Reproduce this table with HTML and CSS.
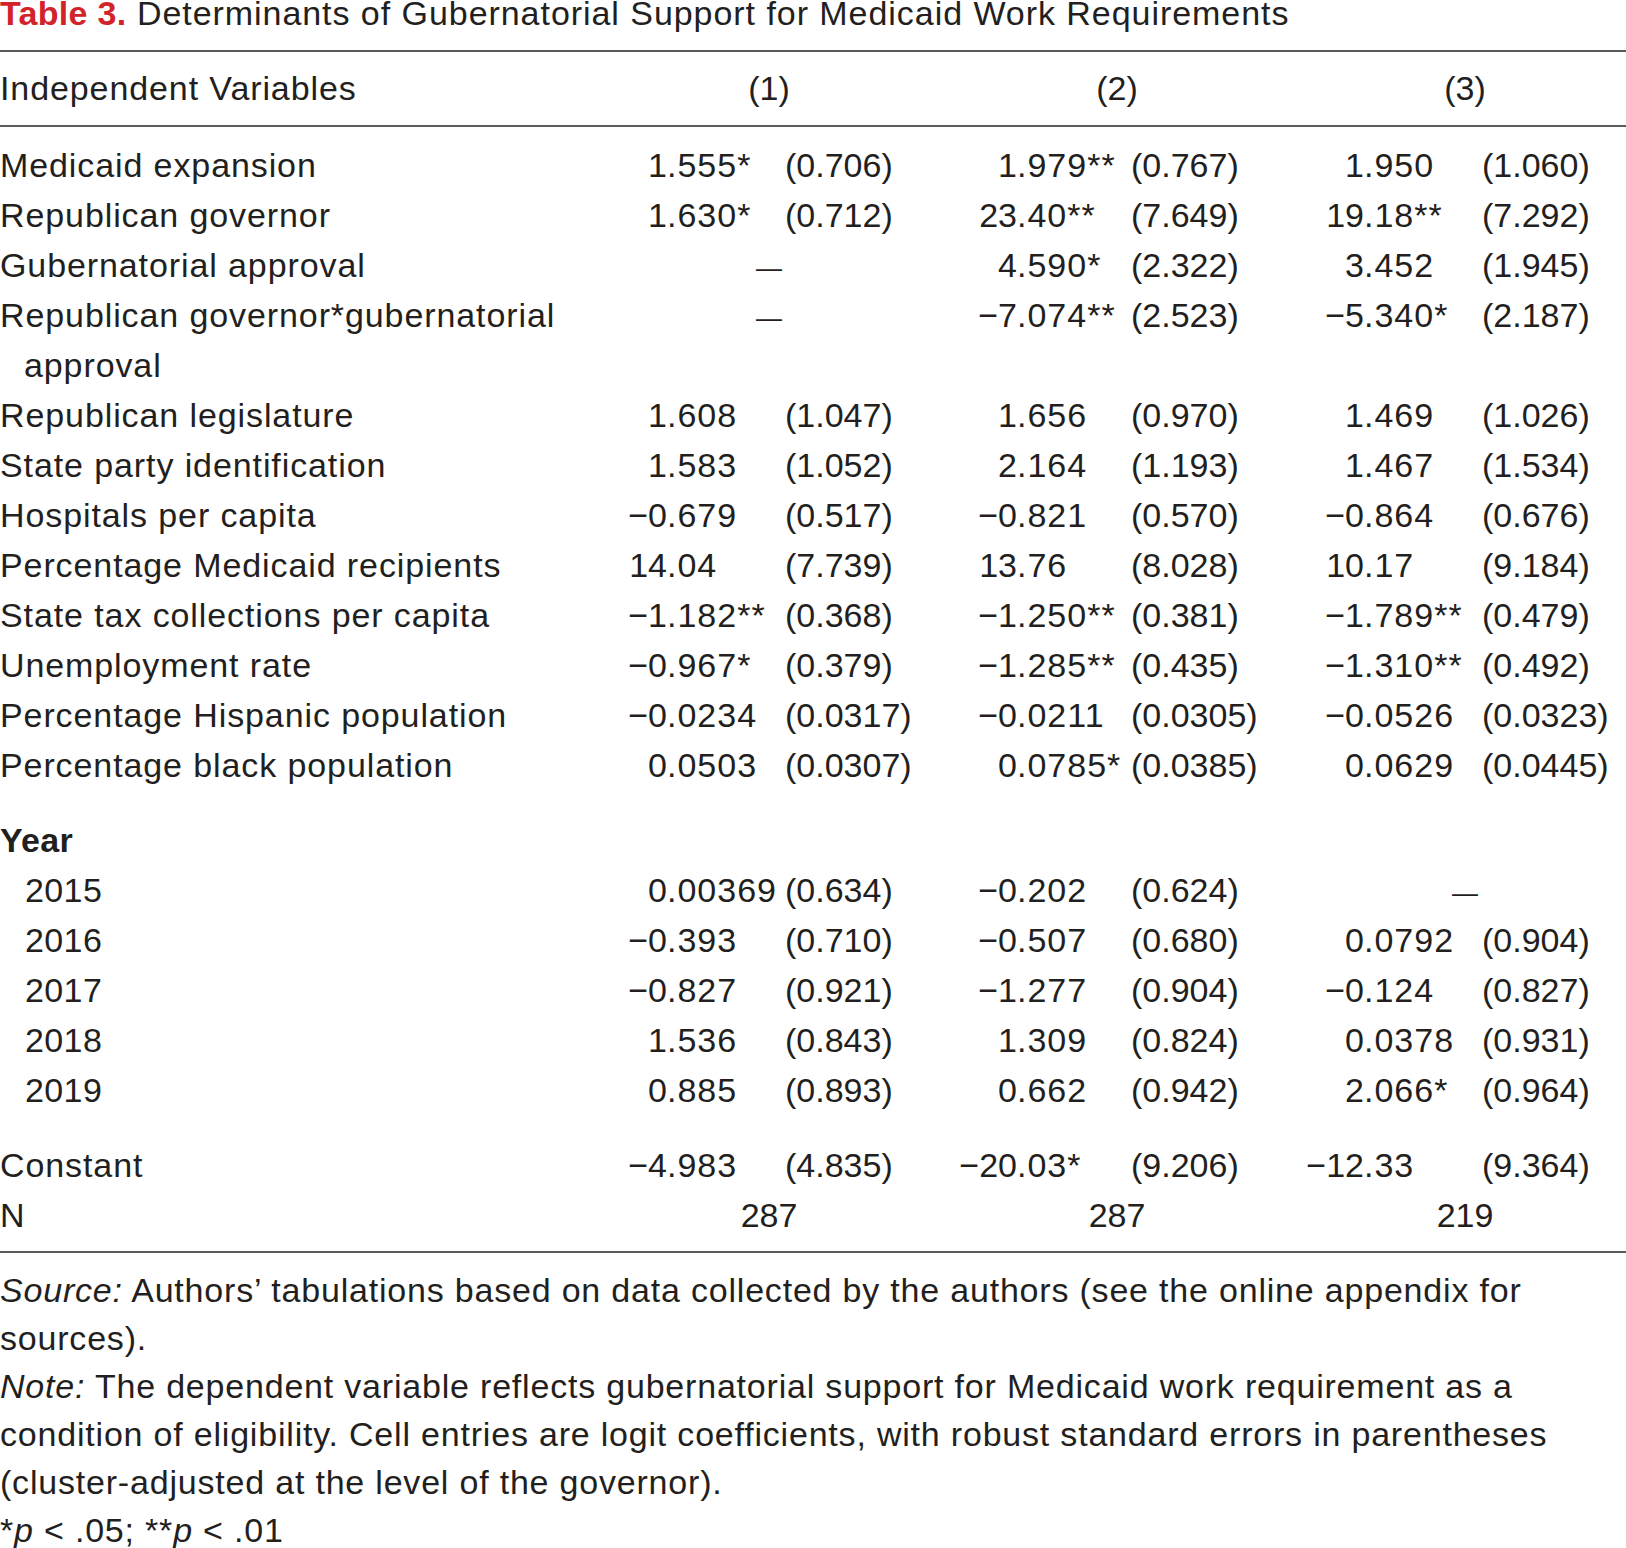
FILE: index.html
```html
<!DOCTYPE html>
<html lang="en">
<head>
<meta charset="utf-8">
<title>Table 3</title>
<link rel="stylesheet" href="styles.css">
</head>
<body>
<div class="title"><span class="title-num">Table 3.</span> Determinants of Gubernatorial Support for Medicaid Work Requirements</div>

<div class="thead">
  <div class="row">
    <div class="lbl">Independent Variables</div>
    <div class="c1">(1)</div>
    <div class="c2">(2)</div>
    <div class="c3">(3)</div>
  </div>
</div>

<div class="tbody">
  <div class="row">
    <div class="lbl">Medicaid expansion</div>
    <span class="i">1</span><span class="f">.555*</span><span class="s">(0.706)</span>
    <span class="i">1</span><span class="f">.979**</span><span class="s">(0.767)</span>
    <span class="i">1</span><span class="f">.950</span><span class="s">(1.060)</span>
  </div>
  <div class="row">
    <div class="lbl">Republican governor</div>
    <span class="i">1</span><span class="f">.630*</span><span class="s">(0.712)</span>
    <span class="i">23</span><span class="f">.40**</span><span class="s">(7.649)</span>
    <span class="i">19</span><span class="f">.18**</span><span class="s">(7.292)</span>
  </div>
  <div class="row">
    <div class="lbl">Gubernatorial approval</div>
    <div class="c1"><span class="dash">—</span></div>
    <span class="i">4</span><span class="f">.590*</span><span class="s">(2.322)</span>
    <span class="i">3</span><span class="f">.452</span><span class="s">(1.945)</span>
  </div>
  <div class="row">
    <div class="lbl">Republican governor*gubernatorial<br><span class="cont">approval</span></div>
    <div class="c1"><span class="dash">—</span></div>
    <span class="i">−7</span><span class="f">.074**</span><span class="s">(2.523)</span>
    <span class="i">−5</span><span class="f">.340*</span><span class="s">(2.187)</span>
  </div>
  <div class="row">
    <div class="lbl">Republican legislature</div>
    <span class="i">1</span><span class="f">.608</span><span class="s">(1.047)</span>
    <span class="i">1</span><span class="f">.656</span><span class="s">(0.970)</span>
    <span class="i">1</span><span class="f">.469</span><span class="s">(1.026)</span>
  </div>
  <div class="row">
    <div class="lbl">State party identification</div>
    <span class="i">1</span><span class="f">.583</span><span class="s">(1.052)</span>
    <span class="i">2</span><span class="f">.164</span><span class="s">(1.193)</span>
    <span class="i">1</span><span class="f">.467</span><span class="s">(1.534)</span>
  </div>
  <div class="row">
    <div class="lbl">Hospitals per capita</div>
    <span class="i">−0</span><span class="f">.679</span><span class="s">(0.517)</span>
    <span class="i">−0</span><span class="f">.821</span><span class="s">(0.570)</span>
    <span class="i">−0</span><span class="f">.864</span><span class="s">(0.676)</span>
  </div>
  <div class="row">
    <div class="lbl">Percentage Medicaid recipients</div>
    <span class="i">14</span><span class="f">.04</span><span class="s">(7.739)</span>
    <span class="i">13</span><span class="f">.76</span><span class="s">(8.028)</span>
    <span class="i">10</span><span class="f">.17</span><span class="s">(9.184)</span>
  </div>
  <div class="row">
    <div class="lbl">State tax collections per capita</div>
    <span class="i">−1</span><span class="f">.182**</span><span class="s">(0.368)</span>
    <span class="i">−1</span><span class="f">.250**</span><span class="s">(0.381)</span>
    <span class="i">−1</span><span class="f">.789**</span><span class="s">(0.479)</span>
  </div>
  <div class="row">
    <div class="lbl">Unemployment rate</div>
    <span class="i">−0</span><span class="f">.967*</span><span class="s">(0.379)</span>
    <span class="i">−1</span><span class="f">.285**</span><span class="s">(0.435)</span>
    <span class="i">−1</span><span class="f">.310**</span><span class="s">(0.492)</span>
  </div>
  <div class="row">
    <div class="lbl">Percentage Hispanic population</div>
    <span class="i">−0</span><span class="f">.0234</span><span class="s">(0.0317)</span>
    <span class="i">−0</span><span class="f">.0211</span><span class="s">(0.0305)</span>
    <span class="i">−0</span><span class="f">.0526</span><span class="s">(0.0323)</span>
  </div>
  <div class="row">
    <div class="lbl">Percentage black population</div>
    <span class="i">0</span><span class="f">.0503</span><span class="s">(0.0307)</span>
    <span class="i">0</span><span class="f">.0785*</span><span class="s">(0.0385)</span>
    <span class="i">0</span><span class="f">.0629</span><span class="s">(0.0445)</span>
  </div>

  <div class="row gap">
    <div class="lbl bold">Year</div>
  </div>
  <div class="row">
    <div class="lbl sub">2015</div>
    <span class="i">0</span><span class="f">.00369</span><span class="s">(0.634)</span>
    <span class="i">−0</span><span class="f">.202</span><span class="s">(0.624)</span>
    <div class="c3"><span class="dash">—</span></div>
  </div>
  <div class="row">
    <div class="lbl sub">2016</div>
    <span class="i">−0</span><span class="f">.393</span><span class="s">(0.710)</span>
    <span class="i">−0</span><span class="f">.507</span><span class="s">(0.680)</span>
    <span class="i">0</span><span class="f">.0792</span><span class="s">(0.904)</span>
  </div>
  <div class="row">
    <div class="lbl sub">2017</div>
    <span class="i">−0</span><span class="f">.827</span><span class="s">(0.921)</span>
    <span class="i">−1</span><span class="f">.277</span><span class="s">(0.904)</span>
    <span class="i">−0</span><span class="f">.124</span><span class="s">(0.827)</span>
  </div>
  <div class="row">
    <div class="lbl sub">2018</div>
    <span class="i">1</span><span class="f">.536</span><span class="s">(0.843)</span>
    <span class="i">1</span><span class="f">.309</span><span class="s">(0.824)</span>
    <span class="i">0</span><span class="f">.0378</span><span class="s">(0.931)</span>
  </div>
  <div class="row">
    <div class="lbl sub">2019</div>
    <span class="i">0</span><span class="f">.885</span><span class="s">(0.893)</span>
    <span class="i">0</span><span class="f">.662</span><span class="s">(0.942)</span>
    <span class="i">2</span><span class="f">.066*</span><span class="s">(0.964)</span>
  </div>

  <div class="row gap">
    <div class="lbl">Constant</div>
    <span class="i">−4</span><span class="f">.983</span><span class="s">(4.835)</span>
    <span class="i">−20</span><span class="f">.03*</span><span class="s">(9.206)</span>
    <span class="i">−12</span><span class="f">.33</span><span class="s">(9.364)</span>
  </div>
  <div class="row">
    <div class="lbl">N</div>
    <div class="c1">287</div>
    <div class="c2">287</div>
    <div class="c3">219</div>
  </div>
</div>

<div class="notes">
  <div><em>Source:</em> Authors’ tabulations based on data collected by the authors (see the online appendix for</div>
  <div>sources).</div>
  <div><em>Note:</em> The dependent variable reflects gubernatorial support for Medicaid work requirement as a</div>
  <div>condition of eligibility. Cell entries are logit coefficients, with robust standard errors in parentheses</div>
  <div>(cluster-adjusted at the level of the governor).</div>
  <div>*<em>p</em> &lt; .05; **<em>p</em> &lt; .01</div>
</div>
</body>
</html>
```

FILE: styles.css
```css
html, body {
  margin: 0;
  padding: 0;
  background: #ffffff;
}

body {
  font-family: "Liberation Sans", Arial, sans-serif;
  font-size: 34px;
  color: #231f20;
  width: 1626px;
}

.title {
  margin-top: -12px;
  line-height: 50px;
  padding-bottom: 12px;
  border-bottom: 2px solid #5a5a5a;
  letter-spacing: 0.95px;
  white-space: nowrap;
}

.title-num {
  color: #d2232a;
  font-weight: bold;
  letter-spacing: 0.3px;
}

.thead {
  padding: 11px 0 12px;
  border-bottom: 2px solid #5a5a5a;
}

.tbody {
  padding: 13px 0 11px;
  border-bottom: 2px solid #5a5a5a;
}

.row {
  display: grid;
  grid-template-columns: 608px 59px 118px 145px 87px 114px 173px 60px 118px 144px;
  line-height: 50px;
  align-items: start;
}

.lbl {
  grid-column: 1;
  letter-spacing: 0.9px;
  white-space: nowrap;
}

.cont {
  padding-left: 24px;
}

.sub {
  padding-left: 25px;
  letter-spacing: 0.4px;
}

.bold {
  font-weight: bold;
  letter-spacing: 0.3px;
}

.i {
  text-align: right;
  white-space: nowrap;
}

.f {
  text-align: left;
  white-space: nowrap;
  letter-spacing: 1px;
}

.s {
  text-align: left;
  white-space: nowrap;
}

.c1 {
  grid-column: 2 / 5;
  text-align: center;
}

.c2 {
  grid-column: 5 / 8;
  text-align: center;
}

.c3 {
  grid-column: 8 / 11;
  text-align: center;
}

.dash {
  font-size: 26px;
  line-height: 1;
}

.gap {
  margin-top: 25px;
}

.notes {
  padding-top: 13px;
  line-height: 48px;
  letter-spacing: 0.8px;
  white-space: nowrap;
}
```
